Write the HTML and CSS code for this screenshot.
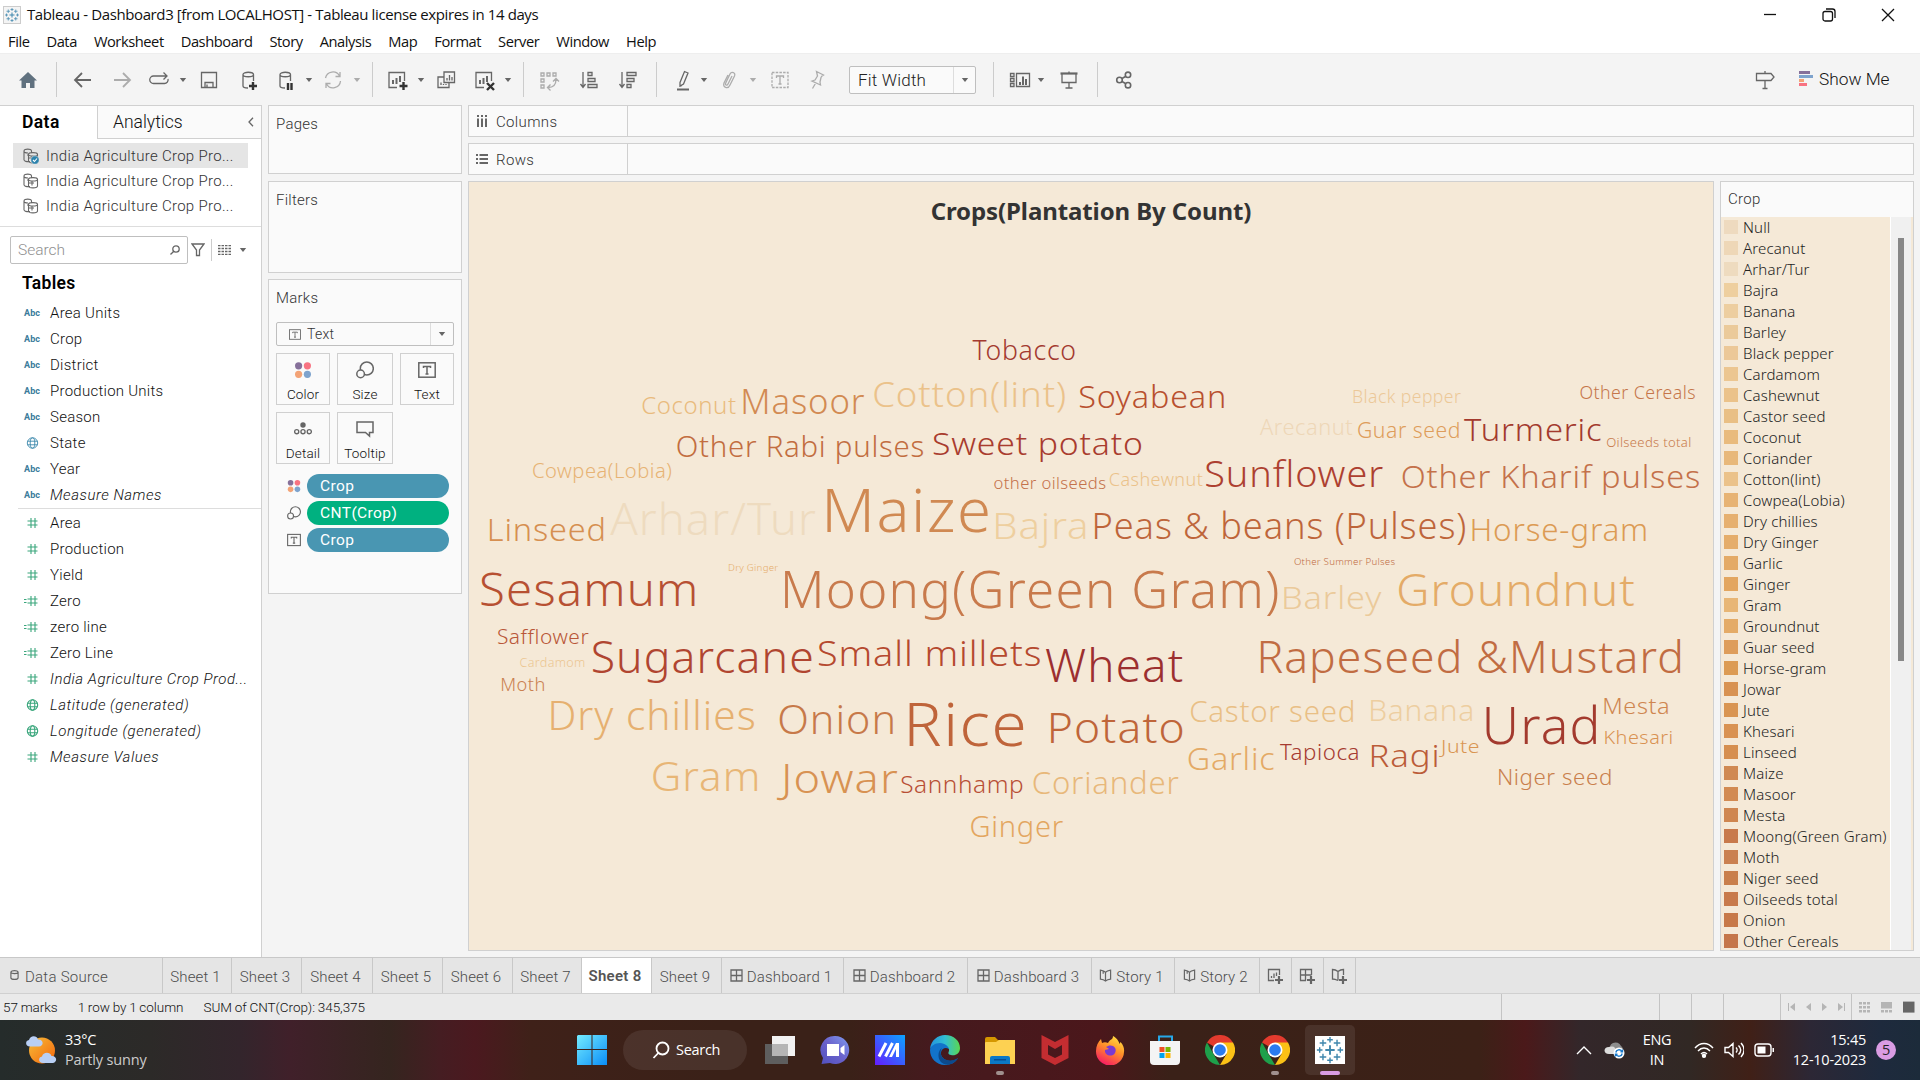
FILE: index.html
```html
<!DOCTYPE html>
<html lang="en">
<head>
<meta charset="utf-8">
<title>Tableau - Dashboard3</title>
<link rel="stylesheet" href="styles.css">
</head>
<body>
<svg class="defs" aria-hidden="true">
  <symbol id="hash" viewBox="0 0 16 12"><path d="M6.500 1v10M10.500 1v10M3 4h10M3 8h10"/></symbol>
  <symbol id="ehash" viewBox="0 0 16 12"><path d="M6.500 1v10M10.500 1v10M3 4h10M3 8h10M-1 4.500h3M-1 7.500h3"/></symbol>
  <symbol id="globe" viewBox="0 0 12 12"><circle cx="6" cy="6" r="5.200"/><ellipse cx="6" cy="6" rx="2.300" ry="5.200"/><path d="M1.200 4.200h9.600M1.200 7.800h9.600"/></symbol>
  <symbol id="tbox" viewBox="0 0 18 16"><rect x=".8" y=".8" width="16.400" height="14.400"/><path d="M5.500 6V4.500h7V6M9 4.500v7.500M7.500 12h3"/></symbol>
  <symbol id="sizes" viewBox="0 0 18 18"><circle cx="10.800" cy="7.500" r="6.500"/><circle class="paper" cx="4.600" cy="12.900" r="3.800"/></symbol>
  <symbol id="dots" viewBox="0 0 18 18"><circle cx="4.600" cy="4.800" r="3.600" fill="#86709a"/><circle cx="13.400" cy="4.800" r="3.600" fill="#f87382"/><circle cx="4.600" cy="13.300" r="3.600" fill="#f3a376"/><circle cx="13.400" cy="13.300" r="3.600" fill="#7ea3cd"/></symbol>
  <symbol id="dbs" viewBox="0 0 16 16"><path d="M7 13.500c-3 .5-6-.3-6-1.800V3C1 .5 8.500.5 8.500 3M1 3c0 1.500 3 2 4 2M8.500 3v1.500M5.500 6.500v6.500c0 2.500 9 2.500 9 0V6.500c0-2.500-9-2.500-9 0 0 2 9 2 9 0M6 10h5M9 8v4.500M4 7h1"/></symbol>
  <symbol id="dash" viewBox="0 0 13 13"><path d="M1 1h11v11H1zM6.500 1v11M1 6.500h11"/></symbol>
  <symbol id="book" viewBox="0 0 13 14"><path d="M6.500 3.500C5 1.800 3 1.500 1 1.200v9.800c2 .2 4 .8 5.500 2 1.500-1.200 3.500-1.800 5.500-2V1.200c-2 .3-4 .6-5.500 2.300zV13M4 2v3"/></symbol>
  <symbol id="tab-logo" viewBox="0 0 32 32"><g fill="none" stroke="#3f87ad"><path stroke-width="2" d="M16 11v10M11 16h10"/><path stroke-width="1.500" d="M16 2v6M13 5h6M16 24v6M13 27h6M5 13v6M2 16h6M27 13v6M24 16h6M8.500 5v7M5 8.500h7M23.500 5v7M20 8.500h7M8.500 20v7M5 23.500h7M23.500 20v7M20 23.500h7"/></g></symbol>
  <symbol id="chrome" viewBox="0 0 30 30"><path fill="#e33b2e" d="M2 7.500a15 15 0 0 1 26 0L15 15z"/><path fill="#1ea04b" d="M2 7.500L8.500 19 15 30A15 15 0 0 1 2 7.500z"/><path fill="#fbc116" d="M28 7.500H15L21.500 19 15 30A15 15 0 0 0 28 7.500z"/><circle cx="15" cy="15" r="7.500" fill="#fff"/><circle cx="15" cy="15" r="5.800" fill="#2a7bf0"/></symbol>
  <symbol id="dd" viewBox="0 0 8 6"><path d="M.8 1h6.400L4 5z"/></symbol>
</svg>

<header class="titlebar">
  <svg class="app-icon"><use href="#tab-logo"/></svg>
  <span class="title">Tableau - Dashboard3 [from LOCALHOST] - Tableau license expires in 14 days</span>
  <div class="winctl">
    <svg viewBox="0 0 14 14"><path d="M1 6.500h12"/></svg>
    <svg viewBox="0 0 14 14"><rect x="1" y="3.500" width="9.500" height="9.500" rx="2"/><path d="M4 1h6.500q2.500 0 2.500 2.500V10"/></svg>
    <svg viewBox="0 0 14 14"><path d="M1 1l12 12M13 1L1 13"/></svg>
  </div>
</header>
<nav class="menubar"><span>File</span><span>Data</span><span>Worksheet</span><span>Dashboard</span><span>Story</span><span>Analysis</span><span>Map</span><span>Format</span><span>Server</span><span>Window</span><span>Help</span></nav>

<div class="toolbar">
  <svg class="ic" viewBox="0 0 24 24"><path fill="#60717f" stroke="none" d="M12 4l9 8.500h-2.500V20H14v-5h-4v5H5.500v-7.500H3z"/></svg><i class="sep"></i>
  <svg class="ic" viewBox="0 0 24 24"><path stroke-width="1.800" d="M20 12H4.500M11 5l-7 7 7 7"/></svg>
  <svg class="ic off" viewBox="0 0 24 24"><path stroke-width="1.800" d="M4 12h15.500M13 5l7 7-7 7"/></svg>
  <svg class="ic" viewBox="0 0 24 24"><path d="M14 8H6.500a3.700 3.700 0 0 0 0 7.500h11a3.700 3.700 0 0 0 3.500-4.500M12 8h8M16.500 4.500L20 8l-3.500 3.500"/></svg><svg class="dd"><use href="#dd"/></svg>
  <svg class="ic" viewBox="0 0 24 24"><path d="M4.500 4.500h15v15h-15zM8 19v-4.500h8V19M10 16.500v2.500"/></svg>
  <svg class="ic" viewBox="0 0 24 24"><path d="M12 20c-3 0-5-1-5-2V6.500M7 6.500c0 3 10.500 3 10.500 0s-10.500-3-10.500 0M17.500 6.500V13"/><path class="bold" d="M17 14v8M13 18h8"/></svg>
  <svg class="ic" viewBox="0 0 24 24"><path d="M12 20c-3 0-5-1-5-2V6.500M7 6.500c0 3 10.500 3 10.500 0s-10.500-3-10.500 0M17.500 6.500V13"/><path class="bold" d="M15 15v7M18.500 15v7"/></svg><svg class="dd"><use href="#dd"/></svg>
  <svg class="ic off" viewBox="0 0 24 24"><path d="M4.500 10a7.500 7.500 0 0 1 14-2M19.500 13a7.500 7.500 0 0 1-14 3M19 4v4.500h-4.500M5 20v-4.500h4.500"/></svg><svg class="dd off"><use href="#dd"/></svg>
  <i class="sep"></i>
  <svg class="ic" viewBox="0 0 24 24"><path d="M12 19.500H4V4.500h15.500V13"/><path stroke-width="2" d="M8 16v-4M11.500 16V10M15 14V8"/><path class="bold" d="M18.500 14v8M14.500 18h8"/></svg><svg class="dd"><use href="#dd"/></svg>
  <svg class="ic" viewBox="0 0 24 24"><path d="M10 4h10.500v10.500H10zM10 9H4v10.500h11v-5M13 12.500V10M15.500 12.500V7M18 12.500V9M7 17v-2.500M9.500 17v-1M12 17v-1"/></svg>
  <svg class="ic" viewBox="0 0 24 24"><path d="M12 19.500H4V4.500h15.500V13"/><path stroke-width="2" d="M8 16v-4M11.500 16V10M15 14V8"/><path class="bold" d="M15 15l7 7M22 15l-7 7"/></svg><svg class="dd"><use href="#dd"/></svg>
  <i class="sep"></i>
  <svg class="ic off" viewBox="0 0 24 24"><path d="M4 5h3v3H4zM10 5h3v3h-3zM16 5h3v3h-3zM4 11h3v3H4zM4 17h3v3H4zM11 19.500c5 0 8-3 8-8M13.500 16.500l-3 3 3 3M16 13.500l3-3 3 3"/></svg>
  <svg class="ic" viewBox="0 0 24 24"><path d="M6 4v15M3.500 16L6 19.500 8.500 16M11 4.500h4v3h-4zM11 10.500h7v3h-7zM11 16.500h9v3h-9z"/></svg>
  <svg class="ic" viewBox="0 0 24 24"><path d="M6 4v15M3.500 16L6 19.500 8.500 16M11 4.500h9v3h-9zM11 10.500h7v3h-7zM11 16.500h4v3h-4z"/></svg>
  <i class="sep"></i>
  <svg class="ic" viewBox="0 0 24 24"><path d="M9 14.500L13.500 3.500l3.500 1.500-4.500 11-3.500 2zM8.500 18.500l2.500-1"/><path stroke-width="2" d="M6 21.500h12"/></svg><svg class="dd"><use href="#dd"/></svg>
  <svg class="ic off" viewBox="0 0 24 24"><path d="M15 8l-4 8c-1 2-3 1-2.500-.5L13 6c1.500-3 6-1.500 4.500 2L13 17c-2 4.500-7.500 2.500-6-2l4-8"/></svg><svg class="dd off"><use href="#dd"/></svg>
  <svg class="ic off" viewBox="0 0 24 24"><path stroke-dasharray="2.500 1.200" d="M4 4.500h16v15H4z"/><path d="M8.500 10V8h7v2M12 8v8M10.500 16h3"/></svg>
  <svg class="ic off" viewBox="0 0 24 24"><path d="M11.500 3.500l7 3.500-1.500 1-1 1.500-1 4.500.5 3-8.500-4 3-1 2.500-4zM11 14.500L7.500 20.500"/></svg>
  <div class="fit"><span>Fit Width</span><i><svg class="dd"><use href="#dd"/></svg></i></div>
  <i class="sep"></i>
  <svg class="ic" viewBox="0 0 24 24"><path d="M8.500 5.500h13v13h-13zM2.500 5.500h3.500v3H2.500zM2.500 10.500h3.500v3H2.500zM2.500 15.500h3.500v3H2.500z"/><path stroke-width="2" d="M12 17v-3M15 17V8.500M18 17v-6"/></svg><svg class="dd"><use href="#dd"/></svg>
  <svg class="ic" viewBox="0 0 24 24"><path stroke-width="2.200" d="M3.500 5.500h17"/><path d="M12 3.500v2M5 6v8.500h14V6M12 14.500v5.500M8.500 20h7"/></svg>
  <i class="sep"></i>
  <svg class="ic" viewBox="0 0 24 24"><g stroke-width="1.600"><circle cx="7.500" cy="12" r="2.800"/><circle cx="16" cy="6.800" r="2.700"/><circle cx="16" cy="17.200" r="2.700"/><path d="M10 10.500l3.500-2M10 13.500l3.500 2"/></g></svg>
  <svg class="ic" viewBox="0 0 24 24"><path d="M3.500 5.500H18l3 3.500-3 3.500H3.500zM12 3v2M12 12.500V20M9.500 20.500h5"/></svg>
  <div class="showme"><svg viewBox="0 0 14 16"><path fill="#86709a" d="M0 0h11v3H0z"/><path fill="#7ea3cd" d="M0 4h14v3H0z"/><path fill="#f3a376" d="M0 8h5v3H0z"/><path fill="#f87382" d="M0 12h8v3H0z"/></svg><span>Show Me</span></div>
</div>

<main class="workspace">
  <aside class="data-pane">
    <div class="pane-tabs"><b>Data</b><div><span>Analytics</span><svg viewBox="0 0 6 10"><path d="M5 .8L1 5l4 4.200"/></svg></div></div>
    <ul class="sources">
      <li class="on"><svg><use href="#dbs"/><circle cx="12" cy="12" r="4.200" fill="#2c83ad" stroke="#e5e5e5" stroke-width=".6"/><path stroke="#fff" d="M10 12l1.500 1.500L14 10.500"/></svg>India Agriculture Crop Pro...</li>
      <li><svg><use href="#dbs"/></svg>India Agriculture Crop Pro...</li>
      <li><svg><use href="#dbs"/></svg>India Agriculture Crop Pro...</li>
    </ul>
    <div class="search-row">
      <div class="search"><span>Search</span><svg viewBox="0 0 10 10"><circle cx="6" cy="4" r="3.200"/><path d="M3.800 6.200L.5 9.500"/></svg></div>
      <svg class="funnel" viewBox="0 0 14 14"><path d="M1 1h12L8.500 7v5.500h-3V7z"/></svg>
      <i></i>
      <svg class="grid" viewBox="0 0 13 10"><path stroke-dasharray="2.500 1" d="M0 .5h13M0 3.500h13M0 6.500h13M0 9.500h13"/></svg>
      <svg class="dd"><use href="#dd"/></svg>
    </div>
    <h2>Tables</h2>
    <ul class="fields dims">
      <li><b>Abc</b>Area Units</li>
      <li><b>Abc</b>Crop</li>
      <li><b>Abc</b>District</li>
      <li><b>Abc</b>Production Units</li>
      <li><b>Abc</b>Season</li>
      <li><svg><use href="#globe"/></svg>State</li>
      <li><b>Abc</b>Year</li>
      <li class="gen"><b>Abc</b>Measure Names</li>
    </ul>
    <ul class="fields meas">
      <li><svg><use href="#hash"/></svg>Area</li>
      <li><svg><use href="#hash"/></svg>Production</li>
      <li><svg><use href="#hash"/></svg>Yield</li>
      <li><svg><use href="#ehash"/></svg>Zero</li>
      <li><svg><use href="#ehash"/></svg>zero line</li>
      <li><svg><use href="#ehash"/></svg>Zero Line</li>
      <li class="gen"><svg><use href="#hash"/></svg>India Agriculture Crop Prod...</li>
      <li class="gen"><svg><use href="#globe"/></svg>Latitude (generated)</li>
      <li class="gen"><svg><use href="#globe"/></svg>Longitude (generated)</li>
      <li class="gen"><svg><use href="#hash"/></svg>Measure Values</li>
    </ul>
  </aside>

  <section class="cards">
    <div class="card pages">Pages</div>
    <div class="card filters">Filters</div>
    <div class="card marks">
      <div class="marks-title">Marks</div>
      <div class="mark-type"><svg class="t"><use href="#tbox"/></svg><span>Text</span><i><svg class="dd"><use href="#dd"/></svg></i></div>
      <div class="mark-grid">
        <div><svg class="dots"><use href="#dots"/></svg>Color</div>
        <div><svg><use href="#sizes"/></svg>Size</div>
        <div><svg><use href="#tbox"/></svg>Text</div>
        <div><svg viewBox="0 0 20 18"><circle cx="10" cy="4.500" r="3" fill="#666" stroke="none"/><circle cx="3" cy="12" r="2.300"/><circle cx="10" cy="12" r="2.300"/><circle cx="17" cy="12" r="2.300"/></svg>Detail</div>
        <div><svg viewBox="0 0 18 18"><path d="M1 2h16v10.500h-3.500V16L9.500 12.500H1z"/></svg>Tooltip</div>
      </div>
      <div class="pill-row"><svg class="dots"><use href="#dots"/></svg><span>Crop</span></div>
      <div class="pill-row green"><svg><use href="#sizes"/></svg><span>CNT(Crop)</span></div>
      <div class="pill-row"><svg><use href="#tbox"/></svg><span>Crop</span></div>
    </div>
  </section>

  <section class="sheet">
    <div class="shelf"><div><svg viewBox="0 0 12 12"><path stroke-width="2" d="M2 0v2M6 0v2M10 0v2M2 3.500V12M6 3.500V12M10 3.500V12"/></svg>Columns</div></div>
    <div class="shelf"><div><svg viewBox="0 0 12 12"><path stroke-width="2" d="M0 2h2M0 6h2M0 10h2M3.500 2H12M3.500 6H12M3.500 10H12"/></svg>Rows</div></div>
    <div class="view">
      <div class="viz"><h1>Crops(Plantation By Count)</h1><svg class="cloud" id="cloud" viewBox="469 241 1244 708"></svg></div>
      <div class="legend"><h3>Crop</h3><div class="legend-body"><ul id="legend"></ul><div class="track"><i></i></div></div></div>
    </div>
  </section>
</main>

<nav class="tabs">
  <div class="ds"><svg viewBox="0 0 10 12"><path d="M1 3v6c0 2.500 8 2.500 8 0V3c0-2.500-8-2.500-8 0 0 2 8 2 8 0"/></svg>Data Source</div>
  <div>Sheet 1</div><div>Sheet 3</div><div>Sheet 4</div><div>Sheet 5</div><div>Sheet 6</div><div>Sheet 7</div><div class="on">Sheet 8</div><div>Sheet 9</div>
  <div><svg><use href="#dash"/></svg>Dashboard 1</div><div><svg><use href="#dash"/></svg>Dashboard 2</div><div><svg><use href="#dash"/></svg>Dashboard 3</div>
  <div><svg><use href="#book"/></svg>Story 1</div><div><svg><use href="#book"/></svg>Story 2</div>
  <div class="new"><svg viewBox="0 0 17 17"><path d="M7 12.500H1.500v-11h11V7M4.500 10V8M7 10V5.500M9.500 8V4.500"/><path stroke-width="2.200" d="M12 8v8M8 12h8"/></svg></div>
  <div class="new"><svg viewBox="0 0 17 17"><path d="M7 12.500H1.500v-11h11V7M6.500 1.500v11M1.500 7h11"/><path stroke-width="2.200" d="M12 8v8M8 12h8"/></svg></div>
  <div class="new"><svg viewBox="0 0 17 17"><path d="M7 12.500C5 11.500 3 11 1.500 11V1.500c2 0 4 .8 5.500 2 1.500-1.200 3.500-2 5.500-2V7M7 3.500v9"/><path stroke-width="2.200" d="M12 8v8M8 12h8"/></svg></div>
</nav>
<footer class="status">
  <div class="st-text"><span>57 marks</span><span>1 row by 1 column</span><span>SUM of CNT(Crop): 345,375</span></div>
  <i></i><i></i><i></i><i></i>
  <div class="nav"><svg viewBox="0 0 64 10"><path d="M3 1h1v8H3zM10 1v8L5 5zM26 1v8l-5-4zM37 1v8l5-4zM53 1v8l5-4zM59 1h1v8h-1z"/></svg></div>
  <div class="modes"><svg viewBox="0 0 56 12"><path d="M0 1h3v2.600H0zM4 1h3v2.600H4zM8 1h3v2.600H8zM0 5h3v2.600H0zM4 5h3v2.600H4zM8 5h3v2.600H8zM0 9h3v2.600H0zM4 9h3v2.600H4zM8 9h3v2.600H8zM22 1h11v6.600H22zM22 9h3v2.600h-3zM26 9h3v2.600h-3zM30 9h3v2.600h-3z"/><path fill="#666" d="M44 .6h11.500v11H44z"/></svg></div>
</footer>

<footer class="taskbar">
  <div class="weather">
    <svg viewBox="0 0 32 30"><defs><linearGradient id="sun" x2="1" y2="1"><stop offset="0" stop-color="#f6bd38"/><stop offset="1" stop-color="#f4660d"/></linearGradient></defs><circle cx="16" cy="15.500" r="13" fill="url(#sun)"/><path fill="#b9cff5" d="M4 11.500c-5 0-5-6-1-6.500C4 0 11 0 12 4.500c6-.5 6 7 1 7zM17 28c-5 0-5-6-1-6.500 1-4.500 8-5 9.500-.5 6-.5 6 7 1 7z"/></svg>
    <div><span>33°C</span><em>Partly sunny</em></div>
  </div>
  <div class="apps">
    <svg class="win" viewBox="0 0 30 30"><defs><linearGradient id="wn" x2="1" y2="1"><stop offset="0" stop-color="#74ecff"/><stop offset="1" stop-color="#0a8df7"/></linearGradient></defs><path fill="url(#wn)" d="M1 0h13.500v14H0V1zM15.500 0H30v14H15.500zM0 15h14.500v15H0zM15.500 15H30v15H15.500z"/></svg>
    <div class="tb-search"><svg viewBox="0 0 18 18"><circle cx="10.500" cy="7.500" r="6"/><path d="M6.300 12L1.500 17"/></svg>Search</div>
    <svg viewBox="0 0 30 30"><path fill="#f1f1f1" d="M7 1h23v20H7z"/><path fill="#5e5e5e" d="M0 9h7v12h16v8H0z"/><path fill="#b5b5b5" d="M7 9h16v12H7z"/></svg>
    <svg viewBox="0 0 30 30"><defs><linearGradient id="ch" x1="1" x2="0" y2="1"><stop offset="0" stop-color="#7f9cf0"/><stop offset=".5" stop-color="#6a62cc"/><stop offset="1" stop-color="#5050bd"/></linearGradient></defs><path fill="url(#ch)" d="M15 1a14 14 0 1 1-5 27l-8.500 1 1.500-6A14 14 0 0 1 15 1z"/><path fill="#fff" d="M7 9h12v12H7zM20.500 13l4-3v10l-4-3z"/></svg>
    <svg viewBox="0 0 30 30"><defs><linearGradient id="ma" x1="1" x2="0" y2="1"><stop offset="0" stop-color="#0ba4ff"/><stop offset="1" stop-color="#651bff"/></linearGradient></defs><path fill="url(#ma)" d="M0 0h30v30H0z"/><path fill="none" stroke="#fff" stroke-width="3" d="M4 21.500L11 8M10.500 21.500L17.500 8"/><path fill="#fff" d="M14 22l7-14h3v14h-3v-8l-4 8z"/></svg>
    <svg viewBox="0 0 30 30"><defs><linearGradient id="ed" x2="1"><stop offset="0" stop-color="#2493de"/><stop offset=".5" stop-color="#31bed3"/><stop offset="1" stop-color="#5bd750"/></linearGradient></defs><path fill="#1273ca" d="M0 15C1 7 8 3 14 6c4 2 6 5 5 8-6-4-11 4-6 9 4 4 10 4 15 0-3 5-8 7-13 7C6 30 0 23 0 15z"/><path fill="url(#ed)" d="M0 14C1 5 8 0 15 0c9 0 15 6 15 13 0 6-5 8-9 7-3-.5-3-2-2-4 1-4-4-8-9-8-5 0-9 3-10 6z"/><path fill="#0c4a8d" d="M12 13c-3 4-1 11 5 12 4 1 8 0 11-2-3 6-10 8-14 6C7 26 7 16 12 13z"/></svg>
    <div class="app-run"><svg viewBox="0 0 30 30"><path fill="#d59700" d="M0 4q0-2 2-2h8l3 3h15v8H0z"/><path fill="#fdd152" d="M0 8q0-1 1-1h10l3-2h16v24H0z"/><path fill="#0b78c6" d="M5 29v-6q0-2 2-2h16q2 0 2 2v6z"/><path fill="#064d93" d="M9 24h12v1.500H9z"/></svg><i></i></div>
    <svg viewBox="0 0 30 30"><path fill="#c42d31" fill-rule="evenodd" d="M1.500 0L15 7 28.500 0v23L15 30 1.500 23zM8 10v9.500L15 23l7-3.500V10l-7 4z"/></svg>
    <svg viewBox="0 0 30 30"><defs><linearGradient id="ff" x1=".8" x2=".3" y2="1"><stop offset="0" stop-color="#ffe341"/><stop offset=".45" stop-color="#ff9029"/><stop offset="1" stop-color="#f51865"/></linearGradient></defs><path fill="url(#ff)" d="M18 1c5 3 6 6 6.500 8l1-2c3 3 4 7 3.500 10a14 14 0 0 1-28-1c0-5 2-9 5-12l1 4c2-1 4-1 6 0 2-4 5-3 5-7z"/><path fill="#793ad2" d="M11 12c5-4 12 0 9 6-3 5-11 2-10-3l4-1z"/></svg>
    <svg viewBox="0 0 30 30"><path fill="none" stroke="#26a8e8" stroke-width="2" d="M9 7V1.500h13V7"/><path fill="#f4f4f4" d="M0 6h30v20q0 4-4 4H4q-4 0-4-4z"/><path fill="#f04e23" d="M9.500 12h5v5h-5z"/><path fill="#7bb500" d="M15.500 12h5v5h-5z"/><path fill="#00a2ed" d="M9.500 18h5v5h-5z"/><path fill="#fbb500" d="M15.500 18h5v5h-5z"/></svg>
    <svg><use href="#chrome"/></svg>
    <div class="app-run"><svg><use href="#chrome"/></svg><i></i></div>
    <div class="app-on"><svg><rect width="30" height="28" y="1" fill="#fff"/><use href="#tab-logo"/></svg><i></i></div>
  </div>
  <div class="tray">
    <svg class="chev" viewBox="0 0 16 10"><path d="M1 9l7-7 7 7"/></svg>
    <svg class="cloudsync" viewBox="0 0 22 18"><path fill="#8c8c8c" stroke="none" d="M6 10a6 6 0 0 1 11-5c3 2 2 7-1 7H6z"/><path fill="#ddd" stroke="none" d="M5 13c-6 0-6-7 0-7 5-2 8 1 7 7z"/><circle cx="15" cy="12" r="5.500" fill="#fff" stroke="none"/><path stroke="#1678cb" d="M11.800 11.500a3.300 3.300 0 0 1 6-1.200M18.200 12.500a3.300 3.300 0 0 1-6 1.200M18.500 8.500v2.200h-2M11.500 15.500v-2.200h2"/></svg>
    <div class="lang"><span>ENG</span><span>IN</span></div>
    <svg class="wifi" viewBox="0 0 20 16"><path d="M1 6c5-6 13-6 18 0M4 9c3.500-4 8.500-4 12 0M7 12c2-2 4-2 6 0"/><circle cx="10" cy="13.800" r="1.500" fill="#fff"/></svg>
    <svg class="vol" viewBox="0 0 20 16"><path d="M1 5.500h3.500L9 1.500v13l-4.500-4H1zM12 5.500c1.500 1.500 1.500 3.500 0 5M14.500 3.500c3 3 3 6 0 9M17 1c4 4.500 4 9.500 0 14"/></svg>
    <svg class="bat" viewBox="0 0 20 14"><rect x="1" y="1" width="16" height="12" rx="3"/><path fill="#fff" stroke="none" d="M3.500 3.500h8v7h-8zM18.500 5h1.500v4h-1.500z"/></svg>
    <div class="clock"><span>15:45</span><span>12-10-2023</span></div>
    <b class="badge">5</b>
  </div>
</footer>
<script src="cloud.js"></script>
</body>
</html>
```
FILE: styles.css
```css
* { box-sizing: border-box; }
html, body { margin: 0; height: 100%; }
body { width: 1920px; height: 1080px; overflow: hidden; display: flex; flex-direction: column; background: #f4f4f4; font: 350 15px Roboto, "Noto Sans", sans-serif; color: #333; }
ul { list-style: none; margin: 0; padding: 0; }
h1, h2, h3 { margin: 0; font-weight: 350; }
svg { display: block; flex: none; fill: none; stroke: #666; stroke-width: 1.300; }
.defs { position: absolute; width: 0; height: 0; }
.dd { width: 8px; height: 6px; fill: #666; stroke: none; }
.off { opacity: .5; }

.titlebar { height: 29px; background: #fff; display: flex; align-items: center; padding-left: 3px; color: #111; font: 15px "Open Sans", sans-serif; flex: none; }
.app-icon { width: 18px; height: 18px; border: 1px solid #ccc; background: #f4f4f4; }
.title { margin-left: 6px; letter-spacing: -.39px; white-space: nowrap; padding-bottom: 1px; }
.winctl { margin-left: auto; display: flex; gap: 45px; padding-right: 25px; }
.winctl svg { width: 14px; height: 14px; stroke: #111; }
.menubar { height: 25px; flex: none; background: #fff; border-bottom: 1px solid #eee; display: flex; gap: 17px; padding: 1px 0 0 8px; align-items: center; font: 14.700px/25px "Open Sans", sans-serif; letter-spacing: -.45px; color: #111; }

.toolbar { height: 51px; flex: none; display: grid; align-items: center; padding-left: 16px;
  grid-template-columns: 40px 14.500px 39px 37.500px 32px 18px 39px 37px 32px 16px 32px 19px 13px 32px 17px 38px 32px 19px 14px 40px 39px 40px 15px 29px 17px 32px 19px 37px 44px 144px 15px 29px 20px 40px 15px 1fr 46px 121px; }
.ic { width: 24px; height: 24px; }
.ic .bold { stroke: #333; stroke-width: 2.400; }
.sep { width: 1px; height: 35px; background: #ccc; }
.fit { width: 127px; height: 28px; border: 1px solid #bfbfbf; border-radius: 2px; background: #fafafa; display: flex; align-items: center; padding-left: 8px; font-size: 17px; letter-spacing: .2px; color: #222; }
.fit i { margin-left: auto; width: 22px; height: 26px; border-left: 1px solid #ddd; display: grid; place-items: center; }
.showme { display: flex; align-items: center; gap: 6px; font-size: 17.300px; color: #111; }
.showme span { padding-bottom: 2px; }
.showme svg { width: 14px; height: 16px; stroke: none; margin-bottom: 1px; }

.workspace { flex: none; height: 852px; display: grid; grid-template-columns: 262px 194px 1446px; column-gap: 6px; }
.data-pane { background: #fff; border-right: 1px solid #d0d0d0; border-top: 1px solid #d0d0d0; }
.pane-tabs { display: grid; grid-template-columns: 97px 1fr; height: 32px; font-size: 17.500px; color: #111; line-height: 32px; }
.pane-tabs b { padding-left: 22px; color: #000; font-weight: 600; letter-spacing: .4px; }
.pane-tabs div { display: flex; align-items: center; justify-content: space-between; background: #fafafa; border-left: 1px solid #d0d0d0; border-bottom: 1px solid #d0d0d0; padding: 0 7px 0 15px; }
.pane-tabs svg { width: 6px; height: 10px; }
.sources { height: 89px; padding: 5px 13px 0; border-bottom: 1px solid #ddd; font-size: 15px; letter-spacing: .3px; color: #333; }
.sources li { height: 25px; line-height: 26px; display: flex; align-items: center; gap: 7px; padding-left: 10px; white-space: nowrap; }
.sources .on { background: #e5e5e5; }
.sources svg { width: 16px; height: 16px; stroke-width: 1.100; }
.search-row { display: flex; align-items: center; padding: 9px 0 0 10px; }
.search { width: 178px; height: 28px; border: 1px solid #bfbfbf; border-radius: 2px; display: flex; align-items: center; justify-content: space-between; padding: 0 7px; font-size: 15.500px; color: #909090; }
.search svg { width: 10px; height: 10px; }
.funnel { width: 14px; height: 14px; margin-left: 3px; }
.search-row i { width: 1px; height: 22px; background: #ccc; margin: 0 6px; }
.grid { width: 13px; height: 10px; margin-right: 8px; }
.data-pane h2 { font-size: 17.500px; font-weight: 600; color: #000; padding-left: 22px; line-height: 38px; height: 36px; letter-spacing: .3px; }
.fields li { height: 26px; display: flex; align-items: center; gap: 9px; padding-left: 24px; letter-spacing: .26px; color: #111; white-space: nowrap; }
.fields svg { width: 17px; height: 12px; overflow: visible; stroke-width: .9; }
.fields b { width: 17px; font: 700 9px/12px Roboto, sans-serif; letter-spacing: .1px; color: #3a7c9b; font-style: normal; }
.dims { height: 208px; }
.dims svg { stroke: #3b88ab; }
.meas { margin-left: 18px; border-top: 1px solid #ddd; padding-top: 1px; }
.meas li { padding-left: 6px; }
.meas svg { stroke: #3aa67c; stroke-width: 1.100; }
.fields .gen { font-style: italic; letter-spacing: .53px; }

.cards { display: flex; flex-direction: column; gap: 7px; }
.card { border: 1px solid #d0d0d0; background: #fafafa; padding: 8px 7px; line-height: 20px; color: #333; font-size: 15px; letter-spacing: .25px; }
.pages { height: 69px; }
.filters { height: 92px; }
.marks { height: 315px; padding: 7px 7px; margin-top: -1px; }
.marks-title { margin-bottom: 14px; padding-top: 1px; }
.mark-type { height: 24px; border: 1px solid #bfbfbf; border-radius: 2px; display: flex; align-items: center; font-size: 14px; padding-left: 12px; gap: 6px; }
.mark-type .t { width: 12px; height: 11px; }
.mark-type i { margin-left: auto; width: 23px; height: 22px; border-left: 1px solid #ddd; display: grid; place-items: center; }
.mark-grid { margin-top: 7px; display: grid; grid-template-columns: 54px 56px 54px; gap: 7px; }
.mark-grid div { height: 52px; border: 1px solid #d0d0d0; display: flex; flex-direction: column; align-items: center; padding-top: 7px; font-size: 13.500px; line-height: 15px; color: #111; gap: 8px; letter-spacing: .15px; }
.mark-grid svg { width: 18px; height: 18px; stroke-width: 1.500; }
.paper { fill: #fafafa; }
.pill-row { display: flex; align-items: center; height: 24px; margin-top: 3px; padding-left: 11px; gap: 6px; }
.mark-grid + .pill-row { margin-top: 10px; }
.pill-row svg { width: 14px; height: 14px; stroke-width: 1.400; }
.marks svg.dots { stroke: none; }
.pill-row span { width: 142px; height: 24px; line-height: 25px; border-radius: 12px; background: #4996b2; color: #fff; padding-left: 13px; font-size: 15.500px; font-weight: 400; letter-spacing: .4px; }
.pill-row.green span { background: #00b180; }

.sheet { display: flex; flex-direction: column; gap: 6px; }
.shelf { height: 32px; border: 1px solid #d0d0d0; background: #fafafa; }
.shelf > div { width: 159px; height: 30px; border-right: 1px solid #d0d0d0; display: flex; align-items: center; gap: 8px; padding-left: 7px; color: #333; letter-spacing: .35px; line-height: 30px; padding-top: 1px; }
.shelf svg { width: 12px; height: 12px; margin-bottom: 2px; }
.view { display: grid; grid-template-columns: 1246px 194px; gap: 6px; height: 770px; }
.viz { background: #f5e9d7; border: 1px solid #d0d0d0; }
.viz h1 { height: 59px; text-align: center; font: 700 24px/58px "Noto Sans", sans-serif; letter-spacing: -.1px; color: #333; }
.cloud { width: 1244px; height: 708px; }
.cloud text { font-family: "Noto Sans", sans-serif; font-weight: 300; stroke: none; }
.legend { border: 1px solid #d0d0d0; background: #fafafa; overflow: hidden; }
.legend h3 { height: 35px; line-height: 35px; padding-left: 7px; font-size: 15px; letter-spacing: .3px; color: #333; }
.legend-body { height: 733px; display: grid; grid-template-columns: 169px 1px 20px 2px; background: #f5e9d7; overflow: hidden; }
.legend li { height: 21px; display: flex; align-items: center; gap: 5px; padding-left: 3px; font: 300 15px/21px "Noto Sans", sans-serif; letter-spacing: .16px; color: #222; white-space: nowrap; }
.legend li i { width: 14px; height: 14px; flex: none; margin-bottom: 2px; }
.track { grid-column: 3; background: #f0f0f0; box-shadow: -1px 0 #fff; padding: 21px 7px 0; }
.track i { display: block; width: 6px; height: 423px; background: #888; }

.tabs { height: 37px; flex: none; background: #e5e5e5; border-top: 1px solid #c8c8c8; border-bottom: 1px solid #d0d0d0; display: grid; font-size: 15px; color: #4c4c4c; letter-spacing: .15px;
  grid-template-columns: 162.500px 69px 70px 71px 70px 70px 69px 70px 70px 122px 124px 124px 83px 85px 32px 32px 32px; }
.tabs div { border-right: 1px solid #c8c8c8; display: flex; align-items: center; justify-content: center; gap: 4px; white-space: nowrap; line-height: 18px; padding: 2px 2px 0 0; }
.tabs .ds { justify-content: flex-start; padding-left: 10px; gap: 6px; letter-spacing: .25px; }
.tabs .on { background: #fff; font-weight: 600; color: #555; letter-spacing: .3px; padding-top: 0; }
.tabs svg { width: 13px; height: 13px; margin-bottom: 3px; }
.tabs .ds svg { width: 9px; height: 12px; }
.tabs .new { padding-left: 2px; }
.tabs .new svg { width: 17px; height: 17px; margin: 0; }
.status { height: 26px; flex: none; background: #eaeaea; display: grid; grid-template-columns: 1501px 157.500px 32px 32px 57px 71px 1fr; font-size: 13.500px; color: #111; }
.st-text { display: flex; gap: 20px; padding-left: 3px; align-items: center; letter-spacing: -.04px; word-spacing: -.5px; }
.status > i, .nav, .modes { border-left: 1px solid #c4c4c4; }
.nav, .modes { display: flex; align-items: center; }
.status svg { stroke: none; fill: #b5b5b5; }
.nav svg { width: 64px; height: 10px; margin-left: 4px; }
.modes svg { width: 56px; height: 12px; margin-left: 7px; }

.taskbar { height: 60px; flex: none; display: grid; grid-template-columns: 577px 999px 1fr; align-items: center; color: #fff; font: 14.500px/20px "Open Sans", sans-serif; letter-spacing: -.3px;
  background: linear-gradient(90deg, #252c2b 0, #2c2a28 150px, #33252c 240px, #40202a 290px, #35251f 390px, #451d22 440px, #4b191f 475px, #3f2119 530px, #3a2118 720px, #3a2118 850px, #451a1e 930px, #4b171b 1100px, #3a2118 1170px, #3c2117 1480px, #4b191a 1525px, #33272a 1580px, #312824 1690px, #402017 1750px, #2c2735 1810px, #1e2a3d 1880px, #1c2b3a 1920px); }
.taskbar svg { stroke: none; }
.weather { display: flex; gap: 7px; padding-left: 26px; align-items: center; letter-spacing: -.15px; }
.weather svg { width: 32px; height: 30px; }
.weather span, .weather em { display: block; font-style: normal; }
.weather em { color: #ccc; }
.apps { display: flex; align-items: center; }
.apps > svg { width: 30px; height: 30px; margin-right: 25px; }
.apps .win { margin-right: 16px; }
.tb-search { width: 124px; height: 40px; border-radius: 20px; background: #ffffff14; margin-right: 18px; display: flex; align-items: center; padding-left: 29px; gap: 6px; }
.tb-search svg { width: 18px; height: 18px; stroke: #fff; stroke-width: 1.800; }
.app-run, .app-on { width: 50px; height: 50px; display: grid; justify-content: center; align-content: space-between; justify-items: center; padding-top: 10px; border-radius: 5px; margin-left: -10px; margin-right: 15px; }
.app-run + .app-on { background: #ffffff14; margin-left: -10px; }
.app-run svg, .app-on svg { width: 30px; height: 30px; }
.app-run i, .app-on i { width: 8px; height: 4px; border-radius: 2px; background: #a0908e; }
.app-on i { width: 20px; background: #d99ce3; }
.tray { display: flex; align-items: center; }
.tray svg { stroke: #fff; stroke-width: 1.400; }
.chev { width: 16px; height: 10px; margin-right: 12px; }
.cloudsync { width: 22px; height: 18px; }
.lang { width: 62px; text-align: center; }
.lang span, .clock span { display: block; }
.wifi { width: 20px; height: 16px; margin: 0 10px 0 6px; }
.vol { width: 20px; height: 16px; margin-right: 10px; }
.bat { width: 20px; height: 14px; }
.clock { width: 92px; text-align: right; letter-spacing: -.25px; }
.badge { width: 20px; height: 20px; border-radius: 50%; background: #d99ce3; color: #222; text-align: center; font-weight: 400; margin-left: 10px; }
```
FILE: cloud.js
```js
// name, colour, font size, left edge, right edge, baseline
const words = [
  ["Arecanut", "#eed7b7", 21.5, 1260, 1352.3, 435],
  ["Arhar/Tur", "#eedbbf", 44, 610.2, 815.5, 534.5],
  ["Bajra", "#eecf9f", 36, 995.5, 1086, 539],
  ["Banana", "#edcea0", 29, 1370.2, 1472.6, 721],
  ["Barley", "#ebca9a", 31.5, 1284.2, 1381.6, 608.6],
  ["Black pepper", "#ecc898", 18, 1353, 1460.8, 403],
  ["Cardamom", "#ecc691", 13.3, 519.6, 584.5, 667],
  ["Cashewnut", "#ebc28a", 17.5, 1109.8, 1202.9, 486.3],
  ["Castor seed", "#e9bf85", 29, 1190.2, 1353, 722.3],
  ["Coconut", "#e9bb7d", 24, 642.3, 735.9, 413.5],
  ["Coriander", "#e8b87a", 30.5, 1032.7, 1178.8, 793.5],
  ["Cotton(lint)", "#ebc28a", 34, 874.3, 1065.7, 407],
  ["Cowpea(Lobia)", "#e7b374", 19.5, 533, 671.4, 478.3],
  ["Dry chillies", "#e6b070", 40, 551.5, 753.9, 730.3],
  ["Dry Ginger", "#e5ad6b", 9.5, 728, 778.4, 571],
  ["Garlic", "#e4aa66", 31, 1187.8, 1273.9, 769.8],
  ["Ginger", "#e3a660", 28.5, 970.6, 1062.9, 836.5],
  ["Gram", "#e8b676", 41, 652.7, 757.6, 790.8],
  ["Groundnut", "#e4ab67", 44, 1398.4, 1633.9, 605.5],
  ["Guar seed", "#de9d5b", 21.5, 1358, 1459.6, 438],
  ["Horse-gram", "#dc9b54", 31, 1472.6, 1646.5, 540.8],
  ["Jowar", "#d89252", 41, 776.5, 897.6, 792.5],
  ["Jute", "#d99552", 18.8, 1438.8, 1479.2, 753],
  ["Khesari", "#d99252", 18.5, 1604.5, 1671.8, 743.5],
  ["Linseed", "#d68f50", 31, 490, 603.3, 540.8],
  ["Maize", "#d08952", 60, 827.5, 987.8, 532.3],
  ["Masoor", "#d28a52", 34, 743.4, 864, 413.5],
  ["Mesta", "#cf8650", 21.5, 1604.5, 1668, 714],
  ["Moong(Green Gram)", "#c87a4c", 52, 785, 1278, 608.3],
  ["Moth", "#ca8050", 18, 501.2, 544.5, 691],
  ["Niger seed", "#c97f4c", 21.5, 1499, 1611.4, 785],
  ["Oilseeds total", "#c87a4b", 13, 1606.2, 1690.2, 447],
  ["Onion", "#c77949", 41, 779.2, 893.5, 733.5],
  ["Other Cereals", "#c5764a", 18, 1580.4, 1695.1, 399],
  ["Other Kharif pulses", "#c4714a", 32, 1401.7, 1699.2, 487.7],
  ["other oilseeds", "#c4714a", 17, 993.5, 1106, 488.7],
  ["Other Rabi pulses", "#c26d40", 29, 676.7, 923.7, 456.7],
  ["Other Summer Pulses", "#c06a42", 9.5, 1293.9, 1395.5, 565],
  ["Peas & beans (Pulses)", "#be653a", 36, 1094.5, 1465.3, 539],
  ["Potato", "#bf6539", 42, 1051, 1182.9, 742.6],
  ["Ragi", "#bb5c38", 31, 1372, 1437.1, 767],
  ["Rapeseed &Mustard", "#c16c42", 44, 1260.5, 1680.4, 673.3],
  ["Rice", "#bf643a", 61.5, 909.5, 1023.7, 746.3],
  ["Safflower", "#b95738", 19.5, 498, 589, 644],
  ["Sannhamp", "#b84f35", 24, 901.2, 1023.3, 792.5],
  ["Sesamum", "#b75032", 45, 481.2, 695, 606],
  ["Small millets", "#b5492f", 35, 818, 1040, 665.8],
  ["Soyabean", "#b8502f", 31, 1079.2, 1223.7, 407.8],
  ["Sugarcane", "#b04530", 44, 592.7, 811.4, 673.3],
  ["Sunflower", "#ad4030", 36, 1205.3, 1382.9, 487],
  ["Sweet potato", "#a93c2e", 31, 933, 1141.6, 454.7],
  ["Tapioca", "#a63a30", 21.5, 1280, 1358, 760],
  ["Tobacco", "#a33a30", 27, 972.6, 1075.1, 360],
  ["Turmeric", "#a33a2e", 31.5, 1464.1, 1601.7, 441],
  ["Urad", "#a33a2e", 52, 1485.7, 1596.3, 744.3],
  ["Wheat", "#9c2f2f", 45, 1046.1, 1182.9, 682.3]
];

const cloud = document.getElementById("cloud");
const pen = document.createElement("canvas").getContext("2d");
for (const [name, colour, size, left, right, base] of words) {
  pen.font = `300 ${size}px "Noto Sans"`;
  const m = pen.measureText(name);
  const tracking = size * 0.025;
  const ink = m.actualBoundingBoxRight + m.actualBoundingBoxLeft + (name.length - 1) * tracking;
  const stretch = (right - left) / ink;
  const t = document.createElementNS("http://www.w3.org/2000/svg", "text");
  t.setAttribute("x", left + m.actualBoundingBoxLeft * stretch);
  t.setAttribute("y", base);
  t.setAttribute("font-size", size);
  t.setAttribute("letter-spacing", tracking);
  t.setAttribute("fill", colour);
  t.setAttribute("textLength", (m.width + name.length * tracking) * stretch);
  t.setAttribute("lengthAdjust", "spacingAndGlyphs");
  t.textContent = name;
  cloud.append(t);
}

// The legend lists the crops in order, down to the last visible row.
const legend = document.getElementById("legend");
const rows = [["Null", "#eedabf"], ...words.slice(0, 34)];
for (const [name, colour] of rows) {
  const li = document.createElement("li");
  const swatch = document.createElement("i");
  swatch.style.background = colour;
  li.append(swatch, name);
  legend.append(li);
}
```
